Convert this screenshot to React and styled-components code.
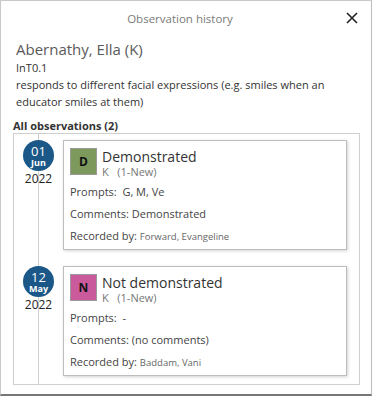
import React from "react";
import styled, { createGlobalStyle } from "styled-components";

const Global = createGlobalStyle`
  html, body { margin: 0; padding: 0; background: #fff; }
  body { font-family: "Open Sans", "Liberation Sans", sans-serif; color: #333; }
  * { box-sizing: border-box; }
`;

const Dialog = styled.div`
  width: 372px;
  height: 396px;
  border: 1px solid #c8c8c8;
  border-bottom: 2px solid #777;
  border-right: 1px solid #bbb;
  background: #fff;
  display: flex;
  flex-direction: column;
  overflow: hidden;
  & > * { flex-shrink: 0; }
`;

const Header = styled.div`
  display: grid;
  grid-template-columns: 1fr auto 1fr;
  align-items: center;
  height: 34px;
  padding: 0 12px 0 0;
`;

const Title = styled.div`
  grid-column: 2;
  font-size: 11.5px;
  color: #7a7a7a;
`;

const Close = styled.button`
  grid-column: 3;
  justify-self: end;
  border: 0;
  background: none;
  padding: 0;
  width: 14px;
  height: 14px;
  display: flex;
  cursor: pointer;
`;

const Student = styled.div`
  padding: 4px 16px 0 15px;
`;

const Name = styled.div`
  font-size: 15px;
  color: #5a5a5a;
  line-height: 20px;
`;

const Code = styled.div`
  font-size: 11px;
  line-height: 17px;
  color: #333;
`;

const Desc = styled.div`
  font-size: 11px;
  line-height: 17px;
  color: #333;
`;

const SectionTitle = styled.div`
  font-size: 11px;
  font-weight: 700;
  color: #333;
  margin: 8px 0 0 12px;
  line-height: 15px;
`;

const Timeline = styled.div`
  position: relative;
  margin: 0 11px 0 12px;
  border: 1px solid #cfcfcf;
  padding: 6px 12px 8px 0;
  display: flex;
  flex-direction: column;
  gap: 16px;
  &::before {
    content: "";
    position: absolute;
    left: 24px;
    top: 0;
    bottom: 0;
    width: 1px;
    background: #cfcfcf;
  }
`;

const Entry = styled.div`
  display: grid;
  grid-template-columns: 49px 1fr;
  align-items: start;
  position: relative;
`;

const DateCol = styled.div`
  display: flex;
  flex-direction: column;
  align-items: center;
`;

const Circle = styled.div`
  width: 31px;
  height: 31px;
  border-radius: 50%;
  background: #1b5787;
  color: #fff;
  display: flex;
  flex-direction: column;
  align-items: center;
  justify-content: center;
  position: relative;
`;

const Day = styled.div`
  font-size: 13px;
  line-height: 14px;
`;

const Month = styled.div`
  font-size: 9px;
  font-weight: 700;
  line-height: 10px;
`;

const Year = styled.div`
  font-size: 12px;
  color: #222;
  line-height: 15px;
  position: relative;
`;

const Card = styled.div`
  border: 1px solid #bdbdbd;
  box-shadow: 1px 1px 3px rgba(0, 0, 0, 0.18);
  background: #fff;
  padding: 7px 6px 1px 6px;
`;

const CardHead = styled.div`
  display: flex;
  gap: 5px;
  align-items: flex-start;
  margin-bottom: 3px;
`;

const Badge = styled.div`
  width: 27px;
  height: 27px;
  border: 1px solid #9a9a9a;
  background: ${(p) => p.$color};
  display: flex;
  align-items: center;
  justify-content: center;
  font-size: 12px;
  font-weight: 700;
  color: #111;
`;

const HeadText = styled.div`
  display: flex;
  flex-direction: column;
`;

const Status = styled.div`
  font-size: 14px;
  color: #333;
  line-height: 17px;
`;

const Level = styled.div`
  font-size: 11px;
  color: #777;
  line-height: 13px;
  white-space: pre;
`;

const Row = styled.div`
  font-size: 11px;
  color: #444;
  line-height: 22px;
  white-space: pre;
`;

const Small = styled.span`
  font-size: 9.5px;
  color: #666;
`;

const entries = [
  {
    day: "01",
    month: "Jun",
    year: "2022",
    letter: "D",
    color: "#7d9a5c",
    status: "Demonstrated",
    prompts: "G, M, Ve",
    comments: "Demonstrated",
    by: "Forward, Evangeline",
  },
  {
    day: "12",
    month: "May",
    year: "2022",
    letter: "N",
    color: "#c95b9d",
    status: "Not demonstrated",
    prompts: "-",
    comments: "(no comments)",
    by: "Baddam, Vani",
  },
];

export default function App() {
  return (
    <>
      <Global />
      <Dialog>
        <Header>
          <Title>Observation history</Title>
          <Close aria-label="Close">
            <svg width="14" height="14" viewBox="0 0 14 14">
              <path d="M2 2 L12 12 M12 2 L2 12" stroke="#222" strokeWidth="1.6" />
            </svg>
          </Close>
        </Header>
        <Student>
          <Name>Abernathy, Ella (K)</Name>
          <Code>InT0.1</Code>
          <Desc>responds to different facial expressions (e.g. smiles when an educator smiles at them)</Desc>
        </Student>
        <SectionTitle>All observations (2)</SectionTitle>
        <Timeline>
          {entries.map((e) => (
            <Entry key={e.day}>
              <DateCol>
                <Circle>
                  <Day>{e.day}</Day>
                  <Month>{e.month}</Month>
                </Circle>
                <Year>{e.year}</Year>
              </DateCol>
              <Card>
                <CardHead>
                  <Badge $color={e.color}>{e.letter}</Badge>
                  <HeadText>
                    <Status>{e.status}</Status>
                    <Level>{"K   (1-New)"}</Level>
                  </HeadText>
                </CardHead>
                <Row>{"Prompts:  " + e.prompts}</Row>
                <Row>{"Comments: " + e.comments}</Row>
                <Row>
                  {"Recorded by: "}
                  <Small>{e.by}</Small>
                </Row>
              </Card>
            </Entry>
          ))}
        </Timeline>
      </Dialog>
    </>
  );
}
